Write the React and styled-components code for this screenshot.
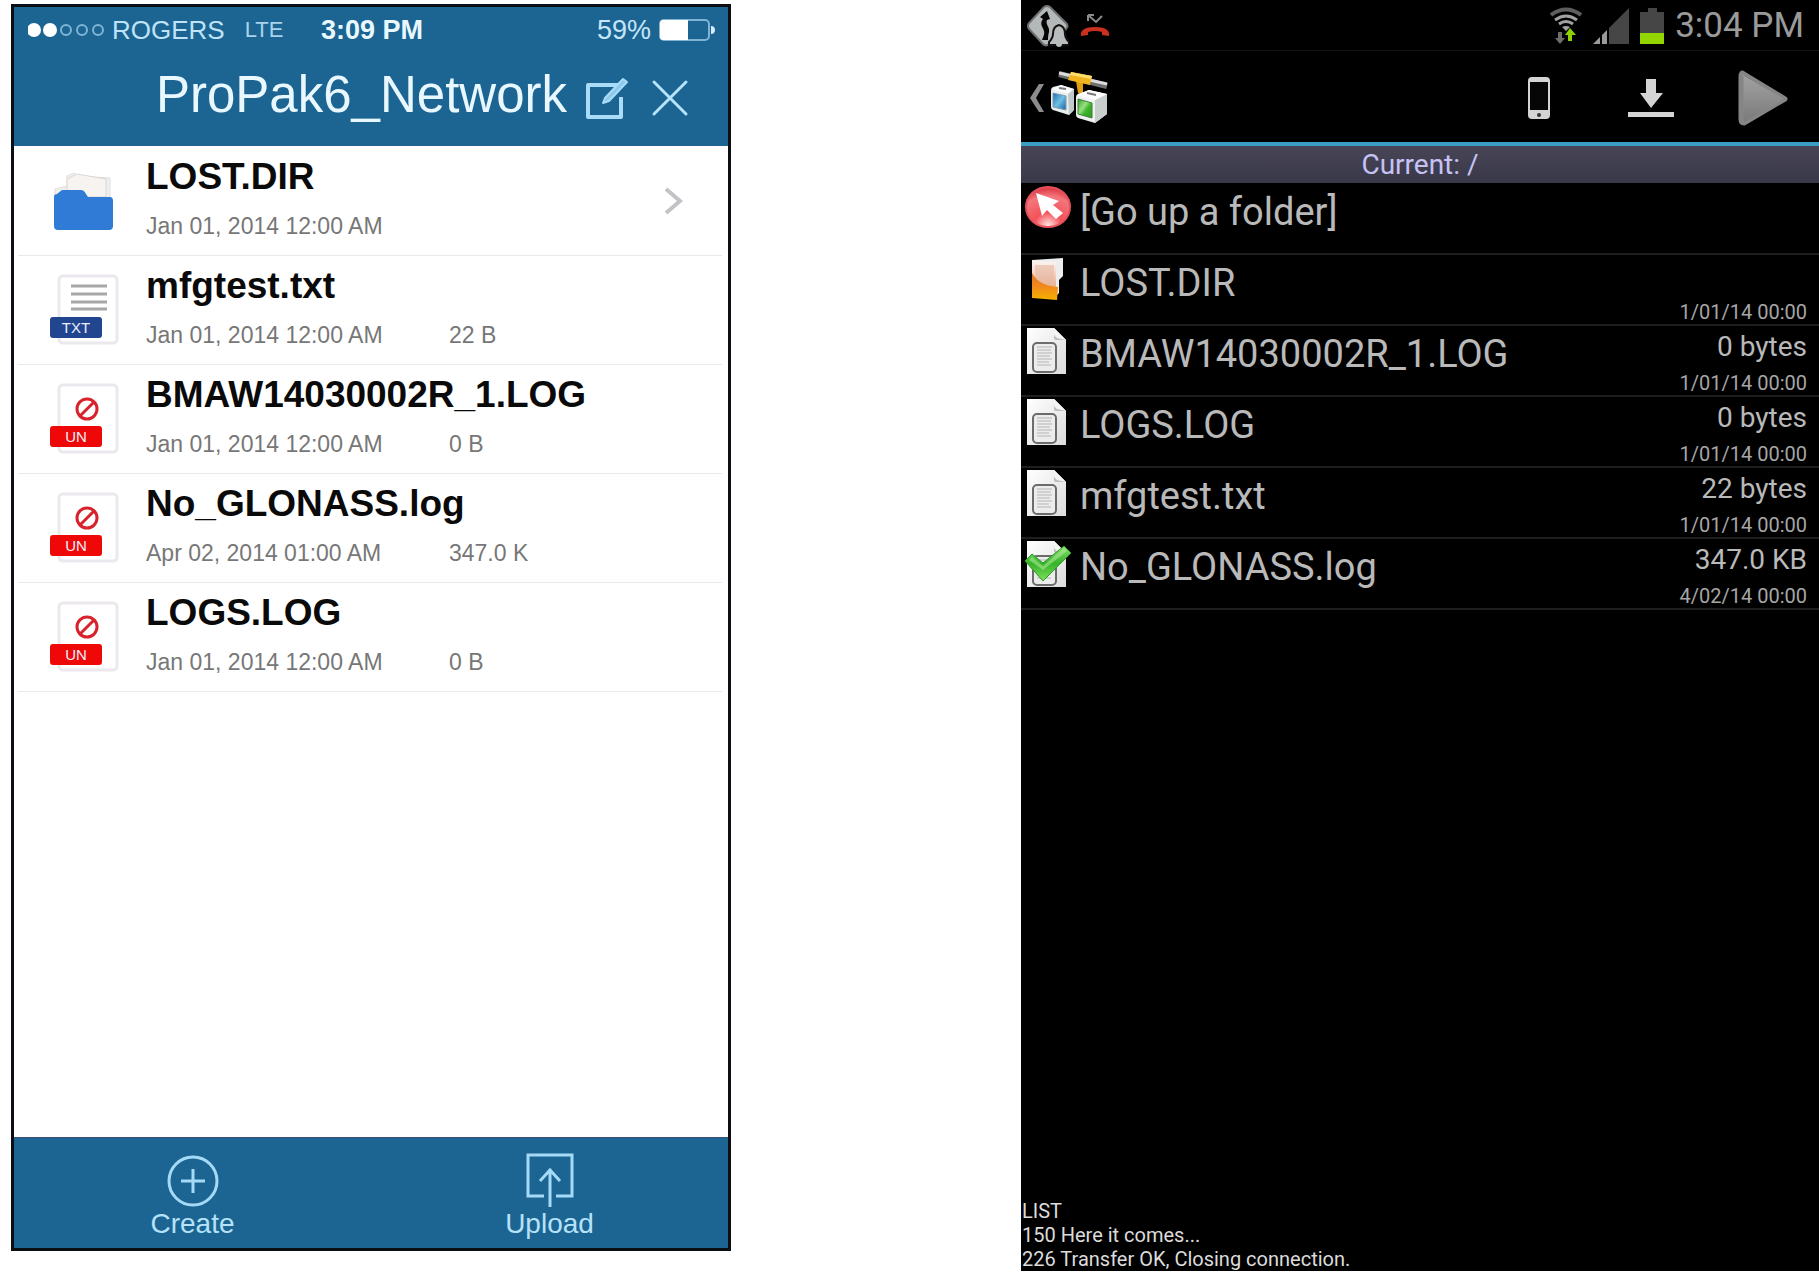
import React from "react";
import styled, { createGlobalStyle } from "styled-components";

const GlobalStyle = createGlobalStyle`
  *, *::before, *::after { box-sizing: border-box; }
  body { margin: 0; background: #fff; }
  ul { list-style: none; margin: 0; padding: 0; }
  button { font: inherit; color: inherit; background: none; border: 0; margin: 0; padding: 0; text-align: left; cursor: pointer; }
  h1, h2, p { margin: 0; font-weight: 400; }
  svg { display: block; flex: none; }
`;

const Page = styled.main`
  display: grid;
  grid-template-columns: 720fr 798fr;
  column-gap: 290px;
  min-height: 100vh;
  padding-left: 11px;
`;

/* ---------- iOS screen ---------- */

const IosScreen = styled.section`
  display: flex;
  flex-direction: column;
  margin: 4px 0 23px;
  border: 3px solid #0b0f14;
  background: #fff;
  font-family: "Liberation Sans", Arial, sans-serif;
`;

const IosHeader = styled.header`
  background: #1c6593;
  color: #e9f8ff;
`;

const IosStatus = styled.div`
  display: grid;
  grid-template-columns: 1fr auto 1fr;
  padding: 8px 12px 0 14px;
  line-height: 30px;
`;

const IosStatusGroup = styled.div`
  display: flex;
  align-items: center;
  justify-content: ${(p) => (p.$end ? "flex-end" : "flex-start")};
  gap: 8px;
`;

const Carrier = styled.span`
  font-size: 26px;
  color: #bfe3f7;
`;

const NetworkType = styled.span`
  margin-left: 12px;
  font-size: 22px;
  color: #a9d3ec;
`;

const IosClock = styled.span`
  font-size: 27px;
  font-weight: 700;
`;

const Percent = styled.span`
  font-size: 27px;
  color: #c4e6f8;
`;

const IosNav = styled.div`
  display: flex;
  align-items: center;
  justify-content: flex-end;
  padding: 20px 39px 21px 0;
`;

const IosTitle = styled.h1`
  margin-right: 18px;
  font-size: 51px;
  line-height: 60px;
`;

const NavButton = styled.button`
  display: flex;
  margin-left: ${(p) => (p.$spaced ? "22px" : "0")};
  padding-top: 6px;
`;

const IosList = styled.ul`
  flex: 1;
  padding: 1px 6px 0 4px;
`;

const IosItem = styled.li`
  border-bottom: 1px solid #e9e9eb;
`;

const IosRow = styled.button`
  display: flex;
  width: 100%;
  height: 108px;
  padding: 0 38px 0 32px;
`;

const IosIcon = styled.span`
  position: relative;
  width: 68px;
  margin-top: 18px;
  flex: none;
`;

const Badge = styled.span`
  position: absolute;
  left: 0;
  top: 43px;
  width: 52px;
  height: 21px;
  border-radius: 3px;
  background: ${(p) => p.$color};
  color: #e8eefc;
  font-size: 15px;
  line-height: 21px;
  text-align: center;
`;

const IosInfo = styled.span`
  display: flex;
  flex-direction: column;
  flex: 1;
  gap: 13px;
  padding: 8px 0 0 28px;
`;

const IosName = styled.span`
  font-size: 37px;
  font-weight: 700;
  line-height: 44px;
  color: #0a0a0a;
`;

const IosDetails = styled.span`
  display: grid;
  grid-template-columns: 303px 1fr;
  font-size: 23px;
  line-height: 28px;
  color: #777;
`;

const RowEnd = styled.span`
  align-self: center;
`;

const IosToolbar = styled.footer`
  display: grid;
  grid-template-columns: 1fr 1fr;
  height: 111px;
  border-top: 1px solid #3f4f70;
  background: #1c6593;
`;

const ToolButton = styled.button`
  display: flex;
  flex-direction: column;
  align-items: center;
  padding-top: 15px;
  color: #b5e2f8;
  font-size: 28px;
  line-height: 32px;
`;

/* ---------- Android screen ---------- */

const DroidScreen = styled.section`
  display: flex;
  flex-direction: column;
  margin-bottom: 3px;
  background: #000;
  color: #b9b9b9;
  font-family: Roboto, sans-serif;
`;

const DroidStatus = styled.div`
  display: flex;
  align-items: center;
  justify-content: space-between;
  height: 51px;
  padding: 1px 15px 0 6px;
  border-bottom: 1px solid #131313;
`;

const DroidStatusGroup = styled.div`
  display: flex;
  align-items: center;
  gap: ${(p) => p.$gap};
`;

const DroidClock = styled.span`
  font-size: 35px;
  line-height: 42px;
  color: #9a9a9a;
`;

const ActionBar = styled.header`
  display: flex;
  justify-content: space-between;
  height: 91px;
`;

const HomeButton = styled.button`
  display: flex;
  align-items: center;
  gap: 5px;
  padding: 3px 0 0 9px;
`;

const Actions = styled.div`
  display: flex;
`;

const ActionButton = styled.button`
  display: flex;
  align-items: center;
  justify-content: center;
  width: 112px;
  padding-top: 3px;
`;

const PathBar = styled.h2`
  border-top: 4px solid #3c9dc4;
  background: linear-gradient(#474556, #393848);
  color: #c6c2f4;
  font-size: 28px;
  line-height: 37px;
  text-align: center;
`;

const DroidList = styled.ul`
  flex: 1;
  padding-top: 1px;
`;

const DroidItem = styled.li`
  border-bottom: 2px solid #1e1e1e;
`;

const DroidRow = styled.button`
  display: flex;
  width: 100%;
  height: 69px;
  padding-right: 12px;
`;

const DroidName = styled.span`
  flex: 1;
  padding: 6px 0 0 5px;
  font-size: 38px;
  line-height: 44px;
`;

const DroidMeta = styled.span`
  display: flex;
  flex-direction: column;
  justify-content: space-between;
  padding-top: 5px;
  text-align: right;
`;

const Size = styled.span`
  min-height: 32px;
  font-size: 28px;
  line-height: 32px;
`;

const Stamp = styled.span`
  font-size: 20px;
  line-height: 24px;
  color: #a6a6a6;
`;

const Log = styled.div`
  padding-left: 1px;
  color: #dcdcdc;
  font-size: 20px;
  line-height: 24px;
`;

/* ---------- iOS icons ---------- */

const SignalDots = () => (
  <svg width="76" height="16" viewBox="0 0 76 16" aria-hidden="true">
    {[0, 1, 2, 3, 4].map((i) => (
      <circle key={i} cx={6 + i * 16} cy="8" r={i < 2 ? 7 : 5} fill={i < 2 ? "#fff" : "none"} stroke={i < 2 ? "none" : "#7fb4d4"} strokeWidth="2" />
    ))}
  </svg>
);

const IosBattery = () => (
  <svg width="57" height="24" viewBox="0 0 57 24" aria-hidden="true">
    <rect x="1" y="2" width="49" height="20" rx="4" fill="none" stroke="#7fb4d4" strokeWidth="2" />
    <path d="M4 2h25v20H4a3 3 0 0 1-3-3V5a3 3 0 0 1 3-3z" fill="#fff" />
    <path d="M52 8c3 0 4 2 4 4s-1 4-4 4z" fill="#d5eefb" />
  </svg>
);

const EditIcon = () => (
  <svg width="44" height="44" viewBox="0 0 44 44" fill="none" stroke="#a8dcf8" aria-hidden="true">
    <path d="M36 9H3v32h33V21" strokeWidth="4" strokeLinejoin="round" />
    <path d="M18 27l2-5L38 3l4 3-18 19z" strokeWidth="2" fill="#8cc9ec" strokeLinejoin="round" />
  </svg>
);

const CloseIcon = () => (
  <svg width="38" height="44" viewBox="0 0 38 44" fill="none" stroke="#b5e4fa" strokeWidth="3" strokeLinecap="round" aria-hidden="true">
    <path d="M3 6l32 32M35 6L3 38" />
  </svg>
);

const ChevronIcon = () => (
  <svg width="20" height="28" viewBox="0 0 20 28" fill="none" stroke="#c3c3c7" strokeWidth="4" aria-hidden="true">
    <path d="M2 2l14 12L2 26" />
  </svg>
);

const FolderIcon = () => (
  <svg width="68" height="72" viewBox="0 0 68 72" aria-hidden="true">
    <path d="M5 36V24l12-3V11l7-3 4 3 32 2v24z" fill="#efefef" stroke="#e0e0e0" />
    <path d="M17 14l10-5 29 5v18H17z" fill="#f6f3f1" stroke="#ddd6d2" />
    <path d="M4 32q0-3 3-3l5-4h19q3 0 5 4l2 3h22q3 0 3 4v25q0 4-4 4H8q-4 0-4-4z" fill="#2f7bd6" />
  </svg>
);

const DocIcon = ({ kind }) => (
  <svg width="70" height="72" viewBox="0 0 70 72" fill="none" aria-hidden="true">
    <rect x="9" y="2" width="58" height="67" rx="4" fill="#fff" stroke="#ebe8ee" strokeWidth="3" />
    {kind === "TXT" ? (
      <path d="M21 12h36M21 20h36M21 28h36M21 35h36" stroke="#a7a7a7" strokeWidth="3" />
    ) : (
      <g stroke="#d8232c" strokeWidth="3">
        <circle cx="37" cy="26" r="10" />
        <path d="M30 33l14-14" />
      </g>
    )}
  </svg>
);

const CreateIcon = () => (
  <svg width="56" height="55" viewBox="0 0 56 55" fill="none" stroke="#a5daf6" strokeWidth="3" aria-hidden="true">
    <circle cx="28" cy="28" r="24" />
    <path d="M28 16v24M16 28h24" />
  </svg>
);

const UploadIcon = () => (
  <svg width="56" height="55" viewBox="0 0 56 55" fill="none" stroke="#a5daf6" strokeWidth="3" aria-hidden="true">
    <path d="M22 43H6V2h44v41H34" />
    <path d="M28 54V17M18 28l10-11 10 11" />
  </svg>
);

/* ---------- Android icons ---------- */

const RoadSignIcon = () => (
  <svg width="42" height="42" viewBox="0 0 42 42" aria-hidden="true">
    <path d="M17 2q3-2 6 0l16 16q3 3 0 6L22 39q-3 3-6 0L2 24q-2-3 0-6z" fill="#b4b8b8" stroke="#6c7070" strokeWidth="2" />
    <path d="M20 6l3 8-3 1c-2 4 3 7 2 12-1 3-1 6-1 8h-6c1-3 3-6 2-9-1-4-5-7-1-12l-3-2z" fill="#050505" />
    <path d="M32 20c5 1 6 5 6 9 0 4 2 6 4 8v3H22v-3c2-2 4-4 4-8 0-4 1-8 6-9z" fill="#b9bdbd" stroke="#111" strokeWidth="2" />
    <circle cx="32" cy="39" r="3" fill="#b9bdbd" />
  </svg>
);

const MissedCallIcon = () => (
  <svg width="30" height="26" viewBox="0 0 30 26" aria-hidden="true">
    <path d="M8 2h6M8 2v6M8 2l8 7 6-6" fill="none" stroke="#8a8a8a" strokeWidth="2" />
    <path d="M1 23c-1-6 4-9 14-9s15 3 14 9l-7-1v-3q-7-2-14 0v3z" fill="#c8301f" />
  </svg>
);

const WifiIcon = () => (
  <svg width="32" height="38" viewBox="0 0 32 38" fill="none" aria-hidden="true">
    <path d="M1 8q15-11 30 0" stroke="#5e5e5e" strokeWidth="4" />
    <path d="M5 13q11-8 22 0M9 17q7-5 14 0" stroke="#a2a2a2" strokeWidth="3" />
    <path d="M12 20q4-2 8 0l-4 4z" fill="#a2a2a2" />
    <path d="M8 25h4v6h3l-5 6-5-6h3z" fill="#6d6d6d" />
    <path d="M18 34h4v-6h4l-6-7-5 7h3z" fill="#8ed200" />
  </svg>
);

const CellIcon = () => (
  <svg width="36" height="36" viewBox="0 0 36 36" aria-hidden="true">
    <path d="M0 36l7-7v7z" fill="#9a9a9a" />
    <path d="M9 27l5-5v14H9z" fill="#9a9a9a" />
    <path d="M16 20L36 0v36H16z" fill="#464646" />
  </svg>
);

const DroidBattery = () => (
  <svg width="24" height="36" viewBox="0 0 24 36" aria-hidden="true">
    <path d="M8 0h9v4h7v21H0V4h8z" fill="#464646" />
    <path d="M0 25h24v11H0z" fill="#93d500" />
  </svg>
);

const BackIcon = () => (
  <svg width="15" height="30" viewBox="0 0 15 30" aria-hidden="true">
    <path d="M9 1h5L6 15l8 14H9L0 15z" fill="#8c8c8c" />
  </svg>
);

const LanIcon = () => (
  <svg width="60" height="54" viewBox="0 0 60 54" aria-hidden="true">
    <defs>
      <linearGradient id="lanBlue" x1="0" y1="0" x2="1" y2="1">
        <stop offset="0" stopColor="#1c69b4" /><stop offset=".5" stopColor="#6fc0e4" /><stop offset="1" stopColor="#1560a6" />
      </linearGradient>
      <linearGradient id="lanGreen" x1="0" y1="0" x2="1" y2="1">
        <stop offset="0" stopColor="#2f9d2b" /><stop offset=".4" stopColor="#9be07f" /><stop offset=".6" stopColor="#3cb42d" /><stop offset="1" stopColor="#2c9a20" />
      </linearGradient>
    </defs>
    <path d="M9 3l48 12" stroke="#6f6f6f" strokeWidth="6" />
    <path d="M9 2l48 11" stroke="#dcdcdc" strokeWidth="3" />
    <path d="M26 10h7v15l-5-3z" fill="#e0a012" />
    <path d="M21 1l21 4-2 9-22-5z" fill="#f2b41c" />
    <path d="M21 1l21 4-1 3-21-4z" fill="#ffdf6b" />
    <path d="M1 19q0-2 2-3l8-2 13 4v21l-5 5-16-5q-2-1-2-3z" fill="#e9efef" />
    <path d="M2 18l9-4 13 4-6 5z" fill="#fbfcfc" />
    <path d="M18 23l6-5v21l-5 5z" fill="#c0caca" />
    <path d="M3 22l13 3v14L3 36z" fill="url(#lanBlue)" stroke="#7f9aa8" />
    <path d="M9 17l7 1" stroke="#777" strokeWidth="2" />
    <path d="M26 26q0-2 2-3l11-4 18 4v20l-12 9-17-5q-2-1-2-3z" fill="#eef2f0" />
    <path d="M45 29l12-6v20l-12 9z" fill="#c8cfcc" />
    <path d="M27 24l12-5 18 4-12 6z" fill="#fdfdfd" />
    <path d="M28 28l14 4v15l-14-4z" fill="url(#lanGreen)" stroke="#3f7d3a" />
    <path d="M37 22l9 2" stroke="#777" strokeWidth="2" />
  </svg>
);

const PhoneIcon = () => (
  <svg width="24" height="44" viewBox="0 0 24 44" aria-hidden="true">
    <rect x="1" y="1" width="22" height="42" rx="4" fill="#d4d4d4" />
    <path d="M3 6h18v28H3z" fill="#060606" />
    <circle cx="12" cy="39" r="2" fill="#333" />
  </svg>
);

const DownloadIcon = () => (
  <svg width="46" height="38" viewBox="0 0 46 38" fill="#d4d4d4" aria-hidden="true">
    <path d="M18 0h10v14h7L23 29 12 14h6zM0 33h46v5H0z" />
  </svg>
);

const PlayIcon = () => (
  <svg width="52" height="60" viewBox="0 0 52 60" aria-hidden="true">
    <defs>
      <linearGradient id="playFill" x1="0" y1="0" x2="0" y2="1">
        <stop offset="0" stopColor="#a2a2a2" /><stop offset="1" stopColor="#7a7a7a" />
      </linearGradient>
    </defs>
    <path d="M5 5L48 31 7 55q-3 0-3-4V9q0-3 1-4z" fill="url(#playFill)" stroke="#858585" strokeWidth="5" strokeLinejoin="round" />
    <path d="M5 7L47 31 7 54V7z" fill="url(#playFill)" />
  </svg>
);

const rowIcons = {
  up: (
    <>
      <defs>
        <radialGradient id="upFill" cx=".5" cy=".95" r=".9">
          <stop offset="0" stopColor="#ffe3e0" /><stop offset=".35" stopColor="#f4525a" /><stop offset=".8" stopColor="#f4767c" /><stop offset="1" stopColor="#e0404a" />
        </radialGradient>
      </defs>
      <ellipse cx="27" cy="23" rx="22" ry="20" fill="url(#upFill)" stroke="#e5525c" strokeWidth="2" />
      <path d="M15 9l23 8-6 4 10 8-7 6-9-9-5 6z" fill="#fff" />
    </>
  ),
  folder: (
    <>
      <defs>
        <linearGradient id="folderFill" x1="0" y1="0" x2="0" y2="1">
          <stop offset="0" stopColor="#e27424" /><stop offset=".5" stopColor="#f08a1c" /><stop offset="1" stopColor="#f7b100" />
        </linearGradient>
        <linearGradient id="folderSheet" x1="0" y1="0" x2="0" y2="1">
          <stop offset="0" stopColor="#fbf6f3" /><stop offset="1" stopColor="#e9a07c" />
        </linearGradient>
      </defs>
      <path d="M11 5l31-2v18l-4 4v13l-4 4-23-6z" fill="#ededed" />
      <path d="M11 6l24 1v30H11z" fill="url(#folderSheet)" />
      <path d="M14 10h19v20H14z" fill="#e6b8a4" opacity=".6" />
      <path d="M11 18q7 13 26 14l-1 13-25-2z" fill="url(#folderFill)" />
    </>
  ),
  file: (
    <>
      <defs>
        <linearGradient id="fileFill" x1="0" y1="0" x2="1" y2="1">
          <stop offset="0" stopColor="#fff" /><stop offset="1" stopColor="#dcdcdc" />
        </linearGradient>
      </defs>
      <path d="M6 2h27l12 12v34H6z" fill="url(#fileFill)" />
      <path d="M33 2l12 12H35q-2 0-2-2z" fill="#bdbdbd" />
      <path d="M33 2l12 12-9-2q-3-2-3-4z" fill="#f4f4f4" />
      <rect x="12" y="17" width="23" height="29" rx="4" fill="#ececec" stroke="#6c6c6c" strokeWidth="2" />
      <path d="M16 21h15M16 24h14M16 27h15M16 30h13M16 33h15M16 36h12M16 39h14" stroke="#d0d0d0" strokeWidth="2" />
    </>
  ),
};

const DroidIcon = ({ kind }) => (
  <svg width="54" height="52" viewBox="0 0 54 52" aria-hidden="true">
    {rowIcons[kind === "checked" ? "file" : kind]}
    {kind === "checked" && (
      <>
        <defs>
          <linearGradient id="tickFill" x1="0" y1="0" x2="0" y2="1">
            <stop offset="0" stopColor="#8be070" /><stop offset=".5" stopColor="#35b32a" /><stop offset="1" stopColor="#7fe05c" />
          </linearGradient>
        </defs>
        <path d="M4 22l7-7 11 9L43 7l7 7-28 28z" fill="url(#tickFill)" stroke="#2c9a26" strokeLinejoin="round" />
        <path d="M8 21l3-3 11 9L43 9l3 3-24 19z" fill="#b8f0a0" opacity=".5" />
      </>
    )}
  </svg>
);

/* ---------- data ---------- */

const iosFiles = [
  { name: "LOST.DIR", date: "Jan 01, 2014 12:00 AM", folder: true },
  { name: "mfgtest.txt", date: "Jan 01, 2014 12:00 AM", size: "22 B", badge: "TXT" },
  { name: "BMAW14030002R_1.LOG", date: "Jan 01, 2014 12:00 AM", size: "0 B", badge: "UN" },
  { name: "No_GLONASS.log", date: "Apr 02, 2014 01:00 AM", size: "347.0 K", badge: "UN" },
  { name: "LOGS.LOG", date: "Jan 01, 2014 12:00 AM", size: "0 B", badge: "UN" },
];

const droidFiles = [
  { name: "[Go up a folder]", kind: "up" },
  { name: "LOST.DIR", kind: "folder", date: "1/01/14 00:00" },
  { name: "BMAW14030002R_1.LOG", kind: "file", size: "0 bytes", date: "1/01/14 00:00" },
  { name: "LOGS.LOG", kind: "file", size: "0 bytes", date: "1/01/14 00:00" },
  { name: "mfgtest.txt", kind: "file", size: "22 bytes", date: "1/01/14 00:00" },
  { name: "No_GLONASS.log", kind: "checked", size: "347.0 KB", date: "4/02/14 00:00" },
];

const logLines = ["LIST", "150 Here it comes...", "226 Transfer OK, Closing connection."];

export default function App() {
  return (
    <Page>
      <GlobalStyle />
      <IosScreen>
        <IosHeader>
          <IosStatus>
            <IosStatusGroup>
              <SignalDots />
              <Carrier>ROGERS</Carrier>
              <NetworkType>LTE</NetworkType>
            </IosStatusGroup>
            <IosClock>3:09 PM</IosClock>
            <IosStatusGroup $end>
              <Percent>59%</Percent>
              <IosBattery />
            </IosStatusGroup>
          </IosStatus>
          <IosNav>
            <IosTitle>ProPak6_Network</IosTitle>
            <NavButton aria-label="Rename"><EditIcon /></NavButton>
            <NavButton $spaced aria-label="Close"><CloseIcon /></NavButton>
          </IosNav>
        </IosHeader>
        <IosList>
          {iosFiles.map((f) => (
            <IosItem key={f.name}>
              <IosRow>
                <IosIcon>
                  {f.folder ? <FolderIcon /> : <DocIcon kind={f.badge} />}
                  {f.badge && <Badge $color={f.badge === "TXT" ? "#21458f" : "#ee0808"}>{f.badge}</Badge>}
                </IosIcon>
                <IosInfo>
                  <IosName>{f.name}</IosName>
                  <IosDetails>
                    <span>{f.date}</span>
                    <span>{f.size}</span>
                  </IosDetails>
                </IosInfo>
                {f.folder && <RowEnd><ChevronIcon /></RowEnd>}
              </IosRow>
            </IosItem>
          ))}
        </IosList>
        <IosToolbar>
          <ToolButton><CreateIcon />Create</ToolButton>
          <ToolButton><UploadIcon />Upload</ToolButton>
        </IosToolbar>
      </IosScreen>

      <DroidScreen>
        <DroidStatus>
          <DroidStatusGroup $gap="11px">
            <RoadSignIcon />
            <MissedCallIcon />
          </DroidStatusGroup>
          <DroidStatusGroup $gap="11px">
            <WifiIcon />
            <CellIcon />
            <DroidBattery />
            <DroidClock>3:04 PM</DroidClock>
          </DroidStatusGroup>
        </DroidStatus>
        <ActionBar>
          <HomeButton aria-label="Back"><BackIcon /><LanIcon /></HomeButton>
          <Actions>
            <ActionButton aria-label="Device"><PhoneIcon /></ActionButton>
            <ActionButton aria-label="Download"><DownloadIcon /></ActionButton>
            <ActionButton aria-label="Play"><PlayIcon /></ActionButton>
          </Actions>
        </ActionBar>
        <PathBar>Current: /</PathBar>
        <DroidList>
          {droidFiles.map((f) => (
            <DroidItem key={f.name}>
              <DroidRow>
                <DroidIcon kind={f.kind} />
                <DroidName>{f.name}</DroidName>
                <DroidMeta>
                  <Size>{f.size}</Size>
                  <Stamp>{f.date}</Stamp>
                </DroidMeta>
              </DroidRow>
            </DroidItem>
          ))}
        </DroidList>
        <Log>
          {logLines.map((line) => (
            <p key={line}>{line}</p>
          ))}
        </Log>
      </DroidScreen>
    </Page>
  );
}
